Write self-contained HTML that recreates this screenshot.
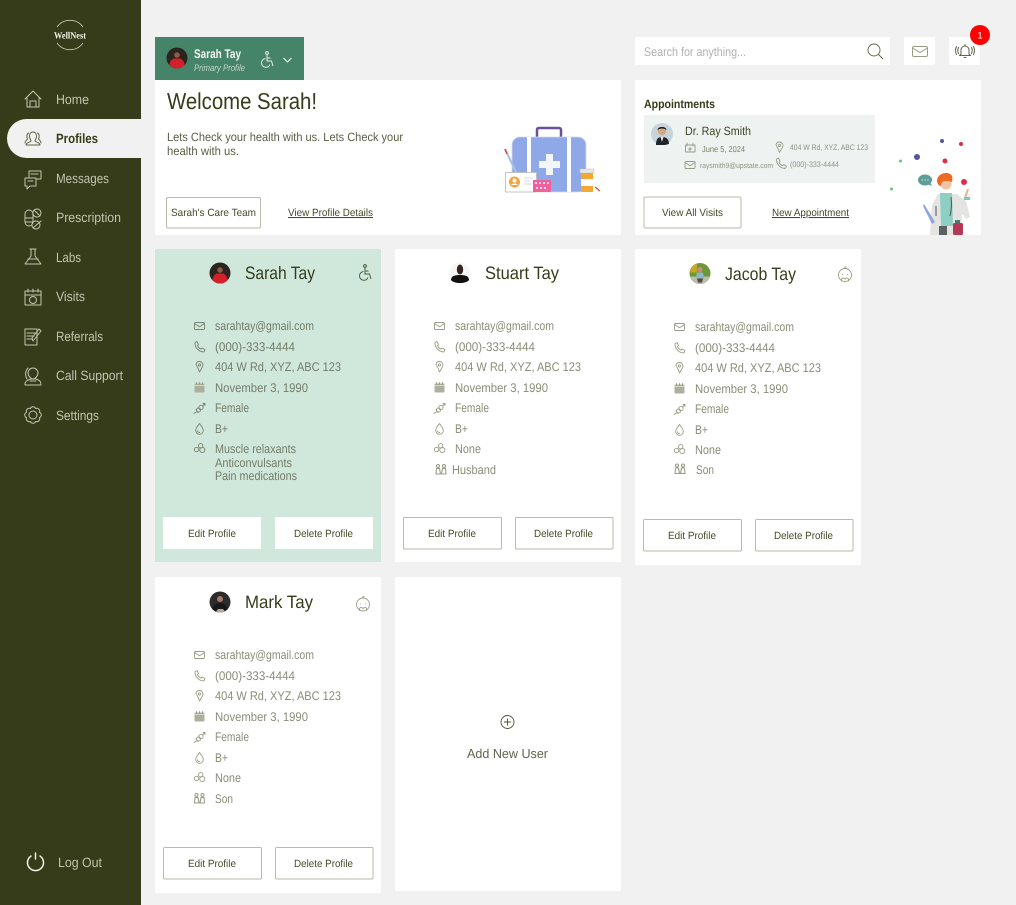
<!DOCTYPE html>
<html lang="en"><head><meta charset="utf-8"><title>WellNest Profiles</title>
<style>
html,body{margin:0;padding:0;background:#f1f1f1;width:1016px;height:905px;overflow:hidden}
svg{display:block}
text{font-family:"Liberation Sans",sans-serif;text-rendering:geometricPrecision}
.nav{font-size:13.5px;fill:#c2c4af}
.r{font-size:12.5px;fill:#8b8d79}
.rg{font-size:12.5px;fill:#747d69}
.n{font-size:18px;fill:#363b1a}
.b{font-size:10.5px;fill:#454a2a}
.ic{fill:none;stroke:#9a9c87;stroke-width:.9;stroke-linecap:round;stroke-linejoin:round}
.ig{fill:none;stroke:#79846f;stroke-width:.9;stroke-linecap:round;stroke-linejoin:round}
.ni{fill:none;stroke:#c3c5b0;stroke-width:1;stroke-linecap:round;stroke-linejoin:round}
.d{fill:none;stroke:#5f6347;stroke-width:1;stroke-linecap:round;stroke-linejoin:round}
.btn{fill:#fff;stroke:#b9baa8;stroke-width:1}
</style></head><body>
<svg xmlns="http://www.w3.org/2000/svg" width="1016" height="905" viewBox="0 0 1016 905">
<defs>
<clipPath id="c0"><circle cx="0" cy="0" r="10.5"/></clipPath>
<g id="aS" clip-path="url(#c0)"><rect x="-11" y="-11" width="22" height="22" fill="#2b241f"/><path d="M-8 11C-8 3-5 1-2 0H2C5 1 8 3 8 11Z" fill="#d3202b"/><circle cx="0" cy="-3" r="2.800" fill="#d09a7f"/><path d="M-3.400-3C-4-8 4-8 3.400-3L3 1H-3Z" fill="#3b2018" opacity=".5"/></g>
<g id="mail"><rect x="-5" y="-3.500" width="10" height="7" rx="1"/><path d="M-5-2.500 0 .8 5-2.500"/></g>
<g id="phone"><path d="M-4.500-4.500-2.500-5.500-1-2.500-2-1.200C-1.200.5 0 1.500 1.500 2.200L2.800 1 5.500 2.800 4.500 4.800C0 5.500-5 .5-4.500-4.500Z"/></g>
<g id="pin"><path d="M0 5C-2-1-3.500-2-3.500-3A3.500 3.500 0 0 1 0-5.500 3.500 3.500 0 0 1 3.500-2C3.500-.5 2 1.500 0 5Z"/><circle cx="0" cy="-2" r="1.100"/></g>
<g id="cal"><rect x="-5" y="-4.500" width="10" height="9" rx="1" fill="#aeb09e" stroke="none"/><path d="M-3-5.500V-3.500M0-5.500V-3.500M3-5.500V-3.500" stroke="#9a9c87"/><path d="M-5-2.500H5" stroke="#fff" stroke-width=".5"/></g>
<g id="gender"><path d="M-2.500 3.500-5.500 5.500M-3.500 1.500-1.500 4.500"/><circle cx="-1" cy="2" r="2"/><circle cx="1.500" cy="-.5" r="2.200"/><path d="M3-2 5.500-4.500M3.500-4.500H5.500V-2.500"/></g>
<g id="drop"><path d="M0-5.500C-2-2.500-3.800-1-3.800 1.500A3.800 3.800 0 0 0 3.800 1.500C3.800-1 2-2.500 0-5.500Z"/><path d="M-2 1.800C-2 3-1 3.500 0 3.500"/></g>
<g id="pills"><circle cx="-3" cy="1.500" r="2.200"/><circle cx="1.200" cy="-2.200" r="2.200"/><circle cx="2.800" cy="2" r="2.600"/></g>
<g id="rel"><path d="M-3-5a1.500 1.500 0 1 1 0 3 1.500 1.500 0 1 1 0-3ZM3-5a1.500 1.500 0 1 1 0 3 1.500 1.500 0 1 1 0-3ZM-5 4.500-4.500-1H-1.500L-.5 4.500ZM.5 4.500 1.500-1H4.500L5 4.500Z" stroke-width="1.100"/></g>
<g id="rows"><use href="#mail" y="-4"/><use href="#phone" y="17"/><use href="#pin" y="37"/><use href="#cal" y="58"/><use href="#gender" y="78"/><use href="#drop" y="99"/><use href="#pills" y="118"/></g>
<g id="chair"><circle cx="1" cy="-7" r="1.400"/><path d="M1-5V1H5.500L7 6M1-2H4.500"/><path d="M-.5-1.500A4.400 4.400 0 1 0 4 4.500"/></g>
<g id="baby"><circle cx="0" cy="0" r="6.500"/><path d="M0-6.500C-1-8 1-8.500 1-7.500M-3.500 6C-4 3-2 2 0 4 2 2 4 3 3.500 6M-2.500-.5H-2.400M2.500-.5H2.400"/></g>
</defs>

<rect width="1016" height="905" fill="#f1f1f1"/>
<!-- Sidebar -->
<rect width="141" height="905" fill="#363b1a"/>
<path d="M141 119H26.500A19.500 19.500 0 0 0 26.500 158H141Z" fill="#f1f1f1"/>
<path d="M57 27A16 16 0 0 1 83 27M83 43A16 16 0 0 1 57 43" fill="none" stroke="#c9cab8" stroke-width=".8"/>
<text x="54" y="38.500" textLength="32" lengthAdjust="spacingAndGlyphs" style="font-family:'Liberation Serif',serif;font-size:9.500px;font-weight:bold;fill:#f3f3ea">WellNest</text>

<g class="ni">
<path d="M25 99 33 91 41 99M27 97V107H39V97M30 107V101H36V107"/>
<path d="M25 178H36V186H30L27 189V186H25ZM29 177V171H41V179L37 179M31 174H38M28 181H33"/>
<path d="M25 214A4 4 0 0 1 33 214V222H25ZM33 218H25M25 222A4 4 0 0 0 33 222M37 209A4 4 0 1 1 36.900 209M34 210 40 216M36 221A4 4 0 1 1 35.900 221M33 228 41 221"/>
<path d="M30 249H36M31 249V256L25 264H41L35 256V249M28 259H38"/>
<path d="M25 291H41V305H25ZM25 295H41M28 289V292M33 289V292M38 289V292"/><circle class="ni" cx="33" cy="300" r="3.500"/>
<path d="M25 329H37V345H25ZM27 333H35M27 336H34M27 339H32M33 341 41 331 39 329 32 338Z"/>
<path d="M28 373A5 5 0 1 1 38 373C38 376 35 379 33 379 31 379 28 376 28 373ZM25 384C25 381 28 380 31 379H36C39 380 41 381 41 385H25ZM27 379C25 376 25 371 28 368M36 381H30"/>
<path d="M39.470 417.680A2.900 2.900 0 0 1 35.680 421.470 2.900 2.900 0 0 1 30.320 421.470 2.900 2.900 0 0 1 26.530 417.680 2.900 2.900 0 0 1 26.530 412.320 2.900 2.900 0 0 1 30.320 408.530 2.900 2.900 0 0 1 35.680 408.530 2.900 2.900 0 0 1 39.470 412.320 2.900 2.900 0 0 1 39.470 417.680Z"/><circle class="ni" cx="33" cy="415" r="4"/>
</g>
<path class="d" stroke="#4c5132" d="M33 132C30 132 29.500 135 29.500 136.500 29.500 138.500 31 140 31 141 30 142.500 26 142.500 26 145H40C40 142.500 36 142.500 35 141 35 140 36.500 138.500 36.500 136.500 36.500 135 36 132 33 132ZM28.500 133C26.500 134 26.500 137 27.500 139 26.500 140.500 25 141 25 143M37.500 133C39.500 134 39.500 137 38.500 139 39.500 140.500 41 141 41 143"/>
<g class="nav">
<text x="56" y="104" textLength="33" lengthAdjust="spacingAndGlyphs">Home</text>
<text x="56" y="143" textLength="42" lengthAdjust="spacingAndGlyphs" style="fill:#363b1a;font-weight:bold">Profiles</text>
<text x="56" y="183" textLength="53" lengthAdjust="spacingAndGlyphs">Messages</text>
<text x="56" y="222" textLength="65" lengthAdjust="spacingAndGlyphs">Prescription</text>
<text x="56" y="262" textLength="25" lengthAdjust="spacingAndGlyphs">Labs</text>
<text x="56" y="301" textLength="29" lengthAdjust="spacingAndGlyphs">Visits</text>
<text x="56" y="341" textLength="47" lengthAdjust="spacingAndGlyphs">Referrals</text>
<text x="56" y="380" textLength="67" lengthAdjust="spacingAndGlyphs">Call Support</text>
<text x="56" y="420" textLength="43" lengthAdjust="spacingAndGlyphs">Settings</text>
<text x="58" y="867" textLength="44" lengthAdjust="spacingAndGlyphs">Log Out</text>
</g>
<path d="M31 856A8 8 0 1 0 40 856M35.500 853V859" fill="none" stroke="#f4f4ec" stroke-width="1.500" stroke-linecap="round"/>

<!-- Welcome -->
<rect x="155" y="80" width="466" height="155" fill="#fff"/>
<rect x="155" y="37" width="149" height="43" fill="#458469"/>
<use href="#aS" x="177" y="58"/>
<text x="194" y="58" textLength="47" lengthAdjust="spacingAndGlyphs" style="font-size:12.500px;font-weight:bold;fill:#f4f6f0">Sarah Tay</text>
<text x="194" y="71" textLength="51" lengthAdjust="spacingAndGlyphs" style="font-size:9.500px;font-style:italic;fill:#c3d6c8">Primary Profile</text>
<use href="#chair" x="266" y="60" fill="none" stroke="#e7eee4" stroke-width="1"/>
<path d="M283.500 58 287.500 62 291.500 58" fill="none" stroke="#f0f4ee" stroke-width="1.100"/>
<text x="167" y="109" textLength="150" lengthAdjust="spacingAndGlyphs" style="font-size:23px;fill:#363b1a">Welcome Sarah!</text>
<text x="167" y="141" textLength="236" lengthAdjust="spacingAndGlyphs" style="font-size:12px;fill:#5a5e44">Lets Check your health with us. Lets Check your</text>
<text x="167" y="155" textLength="72" lengthAdjust="spacingAndGlyphs" style="font-size:12px;fill:#5a5e44">health with us.</text>
<rect class="btn" x="166.500" y="197.500" width="94" height="30.500" rx="1.500"/>
<text class="b" x="171" y="216" textLength="85" lengthAdjust="spacingAndGlyphs">Sarah's Care Team</text>
<text class="b" x="288" y="216" textLength="85" lengthAdjust="spacingAndGlyphs" text-decoration="underline">View Profile Details</text>

<!-- bag illustration -->
<path d="M537 137V130Q537 128 539 128H559Q561 128 561 130V137" fill="none" stroke="#6a5096" stroke-width="2.500"/>
<rect x="512" y="137" width="74" height="55" rx="8" fill="#8fa8e8" stroke="#d5d8e2" stroke-width=".8"/>
<rect x="527" y="137" width="4" height="55" fill="#fff"/><rect x="567" y="137" width="4" height="55" fill="#fff"/>
<path d="M546 154H553V161H560V168H553V175H546V168H539V161H546Z" fill="#f4f5fb"/>
<path d="M505 149 516 172" stroke="#a7bde6" stroke-width="2"/><path d="M505 149 507 154" stroke="#e1502f" stroke-width="1.500"/>
<rect x="505.500" y="172.500" width="31" height="19.500" fill="#fff" stroke="#b9b9b9" stroke-width=".8"/>
<circle cx="514.500" cy="182" r="5.500" fill="#f5a33e"/><circle cx="514.500" cy="180.500" r="2" fill="#fff"/><path d="M511 185C512 183 517 183 518 185Z" fill="#fff"/>
<path d="M524 178H533M524 181H530M524 184H532" stroke="#ccc" stroke-width=".7"/>
<rect x="533" y="180" width="18" height="12" fill="#f0609c"/><path d="M535 183H549M536 188H548" stroke="#fff" stroke-width="1.400" stroke-dasharray="2 2"/>
<rect x="580" y="169" width="14" height="4" fill="#e8e8e8" stroke="#bbb" stroke-width=".5"/>
<rect x="581" y="173" width="12" height="19" fill="#f5a733"/><rect x="581" y="179" width="12" height="7" fill="#fff"/>
<path d="M595 187 600 191" stroke="#e1502f" stroke-width="1.300"/>

<!-- Top bar -->
<rect x="635" y="37" width="255" height="28" fill="#fff"/>
<text x="644" y="56" textLength="102" lengthAdjust="spacingAndGlyphs" style="font-size:12.500px;fill:#b0b0b0">Search for anything...</text>
<circle cx="874" cy="50" r="6" fill="none" stroke="#5f6347" stroke-width=".9"/><path d="M878.500 54.500 883 59" stroke="#5f6347" stroke-width="1"/>
<rect x="904" y="37" width="31" height="28" fill="#fff"/>
<rect x="912.500" y="46.500" width="15" height="10" rx="1.500" fill="none" stroke="#9a9c87" stroke-width="1"/><path d="M912.500 48 920 52.500 927.500 48" fill="none" stroke="#9a9c87"/>
<rect x="949" y="37" width="31" height="28" fill="#fff"/>
<path class="d" d="M961 54V50A4 4 0 0 1 969 50V54L970.500 55.500H959.500ZM964 57.500H966M965 44.500V46M958.500 47.500C957.500 49.500 957.500 51.500 958.500 53.500M956.500 46.500C955.300 49 955.300 52 956.500 54.500M971.500 47.500C972.500 49.500 972.500 51.500 971.500 53.500M973.500 46.500C974.700 49 974.700 52 973.500 54.500"/>
<circle cx="980" cy="35" r="10" fill="#fe0000"/>
<text x="980" y="38.500" text-anchor="middle" style="font-size:9.500px;fill:#fff">1</text>

<!-- Appointments -->
<rect x="635" y="80" width="346" height="155" fill="#fff"/>
<text x="644" y="108" textLength="71" lengthAdjust="spacingAndGlyphs" style="font-size:12px;font-weight:bold;fill:#363b1a">Appointments</text>
<rect x="644" y="115" width="231" height="68" fill="#eef2f0"/>
<g transform="translate(662 134)"><circle r="11" fill="#c7d4d9"/><path d="M-6 11C-6 5-4 3 0 3 4 3 7 5 7 10L3 11Z" fill="#1d2328"/><path d="M-1.500 3 0 8 1.500 3Z" fill="#eee"/><circle cy="-3" r="4.200" fill="#d5a888"/><path d="M-4.500-4C-4.500-8 4.500-8 4.500-4 2-6-2-6-4.500-4Z" fill="#1c1a1a"/></g>
<text x="685" y="135" textLength="66" lengthAdjust="spacingAndGlyphs" style="font-size:12px;fill:#3f4425">Dr. Ray Smith</text>
<path class="ic" d="M685.500 145H695V152H685.500ZM687 143V146M693 143V146M690 147.500V151M688.500 149H691.500"/>
<text x="702" y="152" textLength="43" lengthAdjust="spacingAndGlyphs" style="font-size:8.500px;fill:#7a7d66">June 5, 2024</text>
<use href="#mail" class="ic" x="690" y="165"/>
<text x="700" y="168" textLength="73" lengthAdjust="spacingAndGlyphs" style="font-size:7.500px;fill:#8f9280">raysmith9@upstate.com</text>
<use href="#pin" class="ic" x="779.500" y="147.500"/>
<text x="790" y="150" textLength="78" lengthAdjust="spacingAndGlyphs" style="font-size:8px;fill:#8f9280">404 W Rd, XYZ, ABC 123</text>
<use href="#phone" class="ic" x="781" y="163.500"/>
<text x="790" y="167" textLength="49" lengthAdjust="spacingAndGlyphs" style="font-size:8px;fill:#8f9280">(000)-333-4444</text>
<rect class="btn" x="644" y="197" width="97" height="31" rx="1.500"/>
<text class="b" x="662" y="216" textLength="61" lengthAdjust="spacingAndGlyphs">View All Visits</text>
<text class="b" x="772" y="216" textLength="77" lengthAdjust="spacingAndGlyphs" text-decoration="underline">New Appointment</text>

<!-- doctor illustration -->
<circle cx="942" cy="141" r="2" fill="#55569f"/><circle cx="961" cy="144" r="2" fill="#db2e4a"/><circle cx="917" cy="157" r="3" fill="#55569f"/><circle cx="900.500" cy="161" r="1.500" fill="#6fc07d"/><circle cx="945" cy="161" r="2.500" fill="#db2e4a"/><circle cx="964" cy="182" r="3" fill="#db2e4a"/><circle cx="891.500" cy="189" r="1.500" fill="#6fc07d"/>
<ellipse cx="925" cy="180" rx="7" ry="5.500" fill="#5f9e98"/><path d="M927 184 932 186 930 182Z" fill="#5f9e98"/><path d="M921.500 180H922.500M924.500 180H925.500M927.500 180H928.500" stroke="#fff" stroke-width="1"/>
<path d="M930 235 932 205 938 194H957L966 201 970 217 966 219 962 214 961 235Z" fill="#e4e4e2"/>
<path d="M940 193H952L953 226H941Z" fill="#8dcfc3"/>
<rect x="939" y="226" width="8" height="9" fill="#5d6063"/>
<path d="M936 206V216M951 197C952 205 951 212 950 216" stroke="#555" stroke-width="1" fill="none"/>
<path d="M924 204 935 222 932 224 923 206Z" fill="#8fa4dc"/>
<circle cx="946" cy="184" r="5.500" fill="#efc3a3"/>
<path d="M937 180C938 172 950 171 952 176 953 180 952 184 950 181 945 181 941 180 941 186 939 186 937 184 937 180Z" fill="#ee6a22"/>
<path d="M965 198 968 189" stroke="#e9b796" stroke-width="2.200"/><rect x="964" y="197" width="6" height="3" fill="#7fc7bd"/>
<rect x="953" y="223" width="10" height="12" rx="1.500" fill="#b33a57"/><rect x="955" y="220" width="5" height="3" fill="#4d7a6e"/>

<!-- Card 1 -->
<rect x="155" y="249" width="226" height="313" fill="#d0e7dc"/>
<use href="#aS" x="220" y="273"/>
<text class="n" x="245" y="279" textLength="70" lengthAdjust="spacingAndGlyphs">Sarah Tay</text>
<use href="#chair" x="364" y="273" fill="none" stroke="#4c5a3f" stroke-width="1"/>
<use href="#rows" class="ig" x="199.500" y="330"/>
<g class="rg">
<text x="215" y="330" textLength="99" lengthAdjust="spacingAndGlyphs">sarahtay@gmail.com</text>
<text x="215" y="351" textLength="80" lengthAdjust="spacingAndGlyphs">(000)-333-4444</text>
<text x="215" y="371" textLength="126" lengthAdjust="spacingAndGlyphs">404 W Rd, XYZ, ABC 123</text>
<text x="215" y="392" textLength="93" lengthAdjust="spacingAndGlyphs">November 3, 1990</text>
<text x="215" y="412" textLength="34" lengthAdjust="spacingAndGlyphs">Female</text>
<text x="215" y="433" textLength="13" lengthAdjust="spacingAndGlyphs">B+</text>
<text x="215" y="453" textLength="81" lengthAdjust="spacingAndGlyphs">Muscle relaxants</text>
<text x="215" y="467" textLength="77" lengthAdjust="spacingAndGlyphs">Anticonvulsants</text>
<text x="215" y="480" textLength="82" lengthAdjust="spacingAndGlyphs">Pain medications</text>
</g>
<rect x="163" y="517" width="98" height="32" fill="#fff"/><rect x="275" y="517" width="98" height="32" fill="#fff"/>
<text class="b" x="188" y="537" textLength="48" lengthAdjust="spacingAndGlyphs">Edit Profile</text>
<text class="b" x="294" y="537" textLength="59" lengthAdjust="spacingAndGlyphs">Delete Profile</text>

<!-- Card 2 -->
<rect x="395" y="249" width="226" height="313" fill="#fff"/>
<g transform="translate(460 273)"><circle r="10.500" fill="#f6f6f6"/><path d="M-9 7C-9 3-5 2 0 2 5 2 9 3 9 7 6 11-6 11-9 7Z" fill="#111"/><ellipse cy="-3.500" rx="3.200" ry="5" fill="#33241c"/></g>
<text class="n" x="485" y="279" textLength="74" lengthAdjust="spacingAndGlyphs">Stuart Tay</text>
<use href="#rows" class="ic" x="439.500" y="330"/>
<use href="#rel" class="ic" x="441" y="469.500"/>
<g class="r">
<text x="455" y="330" textLength="99" lengthAdjust="spacingAndGlyphs">sarahtay@gmail.com</text>
<text x="455" y="351" textLength="80" lengthAdjust="spacingAndGlyphs">(000)-333-4444</text>
<text x="455" y="371" textLength="126" lengthAdjust="spacingAndGlyphs">404 W Rd, XYZ, ABC 123</text>
<text x="455" y="392" textLength="93" lengthAdjust="spacingAndGlyphs">November 3, 1990</text>
<text x="455" y="412" textLength="34" lengthAdjust="spacingAndGlyphs">Female</text>
<text x="455" y="433" textLength="13" lengthAdjust="spacingAndGlyphs">B+</text>
<text x="455" y="453" textLength="26" lengthAdjust="spacingAndGlyphs">None</text>
<text x="452" y="474" textLength="44" lengthAdjust="spacingAndGlyphs">Husband</text>
</g>
<rect class="btn" x="403.500" y="517.500" width="98" height="31.500" rx="1"/><rect class="btn" x="515.500" y="517.500" width="97.500" height="31.500" rx="1"/>
<text class="b" x="428" y="537" textLength="48" lengthAdjust="spacingAndGlyphs">Edit Profile</text>
<text class="b" x="534" y="537" textLength="59" lengthAdjust="spacingAndGlyphs">Delete Profile</text>

<!-- Card 3 -->
<rect x="635" y="249" width="226" height="316" fill="#fff"/>
<g transform="translate(700 273.500)" clip-path="url(#c0)"><rect x="-11" y="-11" width="22" height="22" fill="#6c9738"/><rect x="-11" y="-11" width="8" height="10" fill="#c2a82b"/><rect x="-11" y="3" width="22" height="8" fill="#bcbcae"/><circle cy="-4" r="2.600" fill="#c58f78"/><path d="M-3-1H3L4 5H-4Z" fill="#8fb7c4"/><path d="M-3 5H3L2 9H-2Z" fill="#54493f"/></g>
<text class="n" x="725" y="280" textLength="71" lengthAdjust="spacingAndGlyphs">Jacob Tay</text>
<use href="#baby" class="ic" x="845" y="275"/>
<use href="#rows" class="ic" x="679.500" y="331"/>
<use href="#rel" class="ic" x="680" y="469"/>
<g class="r">
<text x="695" y="331" textLength="99" lengthAdjust="spacingAndGlyphs">sarahtay@gmail.com</text>
<text x="695" y="352" textLength="80" lengthAdjust="spacingAndGlyphs">(000)-333-4444</text>
<text x="695" y="372" textLength="126" lengthAdjust="spacingAndGlyphs">404 W Rd, XYZ, ABC 123</text>
<text x="695" y="393" textLength="93" lengthAdjust="spacingAndGlyphs">November 3, 1990</text>
<text x="695" y="413" textLength="34" lengthAdjust="spacingAndGlyphs">Female</text>
<text x="695" y="434" textLength="13" lengthAdjust="spacingAndGlyphs">B+</text>
<text x="695" y="454" textLength="26" lengthAdjust="spacingAndGlyphs">None</text>
<text x="696" y="474" textLength="18" lengthAdjust="spacingAndGlyphs">Son</text>
</g>
<rect class="btn" x="643.500" y="519.500" width="98" height="31.500" rx="1"/><rect class="btn" x="755.500" y="519.500" width="97.500" height="31.500" rx="1"/>
<text class="b" x="668" y="539" textLength="48" lengthAdjust="spacingAndGlyphs">Edit Profile</text>
<text class="b" x="774" y="539" textLength="59" lengthAdjust="spacingAndGlyphs">Delete Profile</text>

<!-- Card 4 -->
<rect x="155" y="577" width="226" height="316" fill="#fff"/>
<g transform="translate(220 602)" clip-path="url(#c0)"><rect x="-11" y="-11" width="22" height="22" fill="#2c2c2c"/><path d="M-8 11C-8 3-4 1 0 1 4 1 8 3 8 11Z" fill="#17181a"/><path d="M-5 11-2 7H3L6 11Z" fill="#b7a49c"/><circle cy="-3" r="3" fill="#a87a66"/></g>
<text class="n" x="245" y="608" textLength="68" lengthAdjust="spacingAndGlyphs">Mark Tay</text>
<use href="#baby" class="ic" x="363" y="604.500"/>
<use href="#rows" class="ic" x="199.500" y="659"/>
<use href="#rel" class="ic" x="199.500" y="798.500"/>
<g class="r">
<text x="215" y="659" textLength="99" lengthAdjust="spacingAndGlyphs">sarahtay@gmail.com</text>
<text x="215" y="680" textLength="80" lengthAdjust="spacingAndGlyphs">(000)-333-4444</text>
<text x="215" y="700" textLength="126" lengthAdjust="spacingAndGlyphs">404 W Rd, XYZ, ABC 123</text>
<text x="215" y="721" textLength="93" lengthAdjust="spacingAndGlyphs">November 3, 1990</text>
<text x="215" y="741" textLength="34" lengthAdjust="spacingAndGlyphs">Female</text>
<text x="215" y="762" textLength="13" lengthAdjust="spacingAndGlyphs">B+</text>
<text x="215" y="782" textLength="26" lengthAdjust="spacingAndGlyphs">None</text>
<text x="215" y="803" textLength="18" lengthAdjust="spacingAndGlyphs">Son</text>
</g>
<rect class="btn" x="163.500" y="847.500" width="98" height="31.500" rx="1"/><rect class="btn" x="275.500" y="847.500" width="97.500" height="31.500" rx="1"/>
<text class="b" x="188" y="867" textLength="48" lengthAdjust="spacingAndGlyphs">Edit Profile</text>
<text class="b" x="294" y="867" textLength="59" lengthAdjust="spacingAndGlyphs">Delete Profile</text>

<!-- Card 5 -->
<rect x="395" y="577" width="226" height="314" fill="#fff"/>
<circle cx="507.500" cy="722" r="6.500" fill="none" stroke="#4c5132" stroke-width=".9"/><path d="M504 722H511M507.500 718.500V725.500" stroke="#4c5132" stroke-width=".9"/>
<text x="467" y="758" textLength="81" lengthAdjust="spacingAndGlyphs" style="font-size:13px;fill:#5f6449">Add New User</text>
</svg>
</body></html>
